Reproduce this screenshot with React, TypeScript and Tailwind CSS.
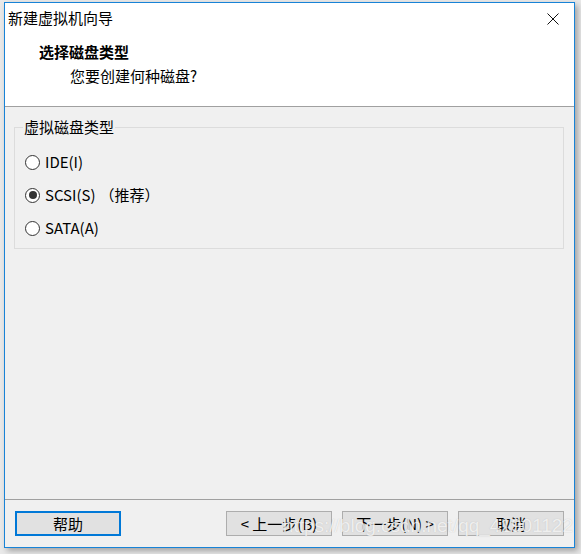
import React, { useState } from 'react';

const font = { fontFamily: '"Noto Sans CJK SC", "Noto Sans", sans-serif' };

const options = [
  { id: 'ide', label: 'IDE(I)' },
  { id: 'scsi', label: 'SCSI(S)', note: '（推荐）' },
  { id: 'sata', label: 'SATA(A)' },
];

const Radio = ({ checked }: { checked: boolean }) => (
  <span className="flex h-[15px] w-[15px] items-center justify-center rounded-full border border-[#333333] bg-white">
    {checked && <span className="h-[8px] w-[8px] rounded-full bg-[#333333]" />}
  </span>
);

const Button = ({ children, primary, className = '' }: { children: React.ReactNode; primary?: boolean; className?: string }) => (
  <button
    className={`flex h-[25px] w-[106px] items-center justify-center bg-[#e1e1e1] text-[15px] leading-none text-black ${
      primary ? 'border-2 border-[#0078d7]' : 'border border-[#adadad]'
    } ${className}`}
  >
    {children}
  </button>
);

export default function App() {
  const [disk, setDisk] = useState('scsi');

  return (
    <div className="h-[554px] w-[581px] overflow-hidden bg-[#e9e9e9] pl-[4px] pt-[2px]" style={font}>
      <div className="relative flex h-[546px] w-[571px] flex-col border border-[#1883d7] bg-[#f0f0f0] shadow-[3px_3px_6px_rgba(0,0,0,0.3)]">
        {/* title + header */}
        <div className="border-b border-[#a0a0a0] bg-white">
          <div className="flex h-[31px] items-center justify-between pl-[3px] pr-[15px]">
            <span className="text-[15px] text-black">新建虚拟机向导</span>
            <svg width="12" height="12" viewBox="0 0 12 12">
              <path d="M0.5 0.5 L11.5 11.5 M11.5 0.5 L0.5 11.5" stroke="#111" strokeWidth="1" />
            </svg>
          </div>
          <div className="h-[72px] pl-[34px] pt-[8px]">
            <div className="text-[15px] font-bold leading-[20px] text-black">选择磁盘类型</div>
            <div className="mt-[4px] pl-[31px] text-[15px] leading-[20px] text-black">您要创建何种磁盘?</div>
          </div>
        </div>

        {/* content */}
        <div className="flex-1 px-[9px] pt-[10px]">
          <fieldset className="mr-[1px] border border-[#dcdcdc] pb-[10px] pl-[10px]">
            <legend className="ml-[-2px] px-[1px] text-[15px] leading-[20px] text-black">虚拟磁盘类型</legend>
            <div className="mt-[15px] flex flex-col gap-[13px]">
              {options.map((o) => (
                <label key={o.id} className="flex h-[20px] cursor-default items-center gap-[5px]" onClick={() => setDisk(o.id)}>
                  <Radio checked={disk === o.id} />
                  <span className="text-[15px] leading-[20px] text-black">
                    {o.label}
                    {o.note && <span className="ml-[4px]">{o.note}</span>}
                  </span>
                </label>
              ))}
            </div>
          </fieldset>
        </div>

        {/* footer */}
        <div className="flex h-[48px] items-center border-t border-[#a0a0a0] px-[10px]">
          <Button primary>帮助</Button>
          <div className="ml-auto flex gap-[10px]">
            <Button>&lt; 上一步(B)</Button>
            <Button>下一步(N) &gt;</Button>
            <Button>取消</Button>
          </div>
        </div>

        <div
          className="pointer-events-none absolute bottom-[12px] right-[1px] text-[19px] leading-none text-white/75 [text-shadow:0_0_1px_rgba(150,150,150,0.5)]"
          style={{ fontFamily: '"Liberation Sans", Arial, sans-serif' }}
        >
          https://blog.csdn.net/qq_41901122
        </div>
      </div>
    </div>
  );
}
